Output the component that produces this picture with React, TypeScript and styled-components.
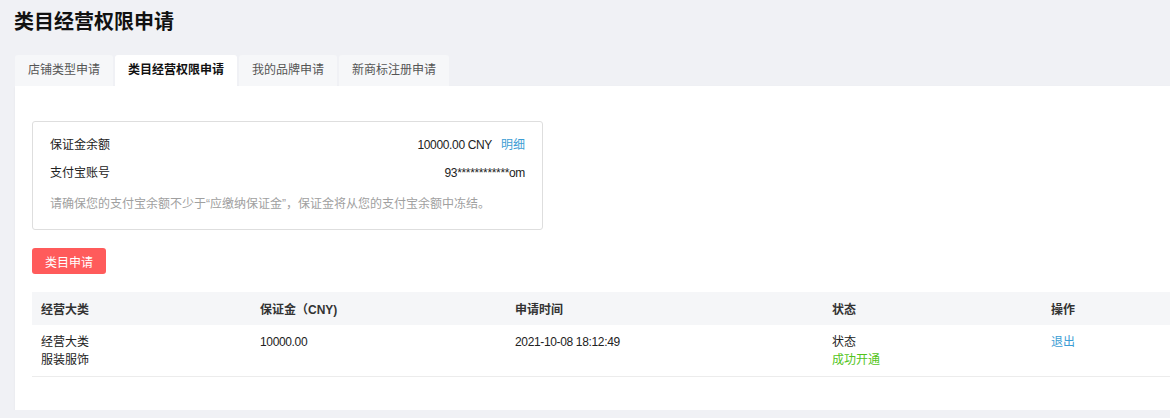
import React from "react";
import styled, { createGlobalStyle } from "styled-components";

const Global = createGlobalStyle`
  html, body { margin: 0; padding: 0; overflow: hidden; }
  body {
    background: #f0f1f5;
    font-family: "Liberation Sans", "Noto Sans CJK SC", sans-serif;
    font-size: 12px;
    color: #333;
  }
`;

const Page = styled.div`
  width: 1240px;
  padding: 10px 0 0 15px;
  box-sizing: border-box;
`;

const Title = styled.h1`
  margin: 0 0 0 -1px;
  font-size: 20px;
  line-height: 24px;
  font-weight: 700;
  color: #111;
`;

const Tabs = styled.div`
  display: flex;
  gap: 2px;
  margin-top: 21px;
`;

const Tab = styled.div<{ $active?: boolean }>`
  height: 31px;
  line-height: 31px;
  padding: 0 13px;
  border-radius: 3px 3px 0 0;
  background: ${(p) => (p.$active ? "#fff" : "#f6f7f9")};
  color: ${(p) => (p.$active ? "#111" : "#555")};
  font-weight: ${(p) => (p.$active ? 700 : 400)};
  font-size: 12px;
`;

const Panel = styled.div`
  background: #fff;
  padding: 35px 17px 33px;
  box-shadow: 0 1px 2px rgba(0, 0, 0, 0.06);
`;

const InfoBox = styled.div`
  width: 511px;
  box-sizing: border-box;
  border: 1px solid #dedede;
  border-radius: 3px;
  padding: 14px 17px 16px;
`;

const InfoRow = styled.div<{ $gap?: number }>`
  display: flex;
  justify-content: space-between;
  line-height: 18px;
  margin-top: ${(p) => p.$gap ?? 0}px;
  color: #222;
`;

const Num = styled.span`
  letter-spacing: -0.35px;
  color: #222;
`;

const Link = styled.a`
  color: #3c9dd4;
  text-decoration: none;
  cursor: pointer;
`;

const DetailLink = styled(Link)`
  margin-left: 9px;
`;

const Note = styled.div`
  margin-top: 13px;
  line-height: 18px;
  color: #a0a0a0;
`;

const PrimaryButton = styled.button`
  display: block;
  margin-top: 18px;
  height: 26px;
  padding: 0 13px;
  border: none;
  border-radius: 3px;
  background: #ff5b5b;
  color: #fff;
  font-family: inherit;
  font-size: 12px;
`;

const Table = styled.div`
  margin-top: 18px;
  margin-right: -40px;
`;

const cols = "219px 255px 317px 219px 1fr";

const HeadRow = styled.div`
  display: grid;
  grid-template-columns: ${cols};
  height: 33px;
  align-items: center;
  background: #f5f6f8;
  font-weight: 700;
  color: #333;
`;

const BodyRow = styled.div`
  display: grid;
  grid-template-columns: ${cols};
  padding: 8px 0 7px;
  border-bottom: 1px solid #ececec;
  line-height: 18px;
  color: #222;
`;

const Cell = styled.div`
  padding-left: 9px;
`;

const Success = styled.div`
  color: #52c41a;
`;

export default function App() {
  return (
    <>
      <Global />
      <Page>
        <Title>类目经营权限申请</Title>
        <Tabs>
          <Tab>店铺类型申请</Tab>
          <Tab $active>类目经营权限申请</Tab>
          <Tab>我的品牌申请</Tab>
          <Tab>新商标注册申请</Tab>
        </Tabs>
        <Panel>
          <InfoBox>
            <InfoRow>
              <span>保证金余额</span>
              <span>
                <Num>10000.00 CNY</Num>
                <DetailLink>明细</DetailLink>
              </span>
            </InfoRow>
            <InfoRow $gap={10}>
              <span>支付宝账号</span>
              <Num>93************om</Num>
            </InfoRow>
            <Note>请确保您的支付宝余额不少于“应缴纳保证金”，保证金将从您的支付宝余额中冻结。</Note>
          </InfoBox>
          <PrimaryButton>类目申请</PrimaryButton>
          <Table>
            <HeadRow>
              <Cell>经营大类</Cell>
              <Cell>保证金（CNY)</Cell>
              <Cell>申请时间</Cell>
              <Cell>状态</Cell>
              <Cell>操作</Cell>
            </HeadRow>
            <BodyRow>
              <Cell>
                <div>经营大类</div>
                <div>服装服饰</div>
              </Cell>
              <Cell>
                <Num>10000.00</Num>
              </Cell>
              <Cell>
                <Num>2021-10-08 18:12:49</Num>
              </Cell>
              <Cell>
                <div>状态</div>
                <Success>成功开通</Success>
              </Cell>
              <Cell>
                <Link>退出</Link>
              </Cell>
            </BodyRow>
          </Table>
        </Panel>
      </Page>
    </>
  );
}
